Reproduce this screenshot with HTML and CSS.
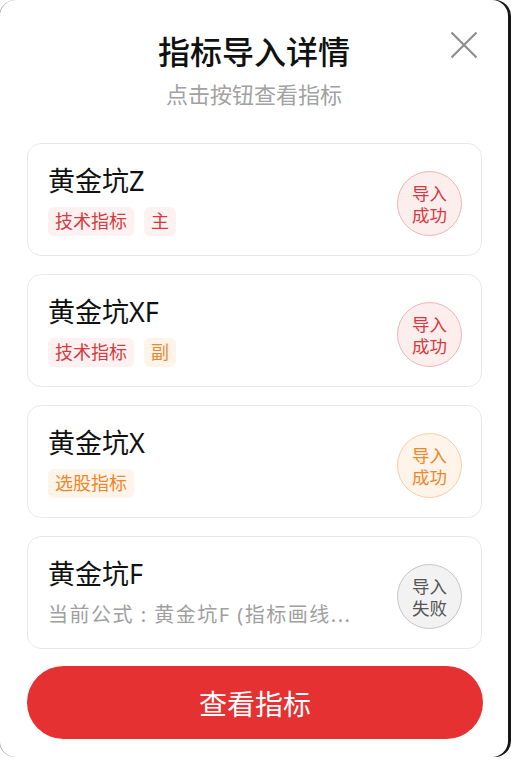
FILE: index.html
```html
<!doctype html>
<html lang="zh-CN">
  <head>
    <meta charset="UTF-8" />
    <meta name="viewport" content="width=device-width, initial-scale=1.0" />
    <title>指标导入详情</title>
    <link rel="stylesheet" href="styles.css">
  </head>
  <body>
    <!-- Import result sheet -->
    <div class="sheet">
      <div class="sheet-header">
        <div class="sheet-title">指标导入详情</div>
        <div class="sheet-subtitle">点击按钮查看指标</div>
        <button class="close-btn" title="关闭">
          <svg width="28" height="28" viewBox="0 0 28 28">
            <path d="M1.5 1.5 L26.5 26.5 M26.5 1.5 L1.5 26.5" stroke="#8e8e8e" stroke-width="2.2" fill="none" />
          </svg>
        </button>
      </div>

      <div class="import-list">
        <div class="import-card">
          <div class="import-info">
            <div class="import-name">黄金坑Z</div>
            <div class="tag-row">
              <span class="tag tag-red">技术指标</span>
              <span class="tag tag-red">主</span>
            </div>
          </div>
          <div class="status status-red">导入<br>成功</div>
        </div>

        <div class="import-card">
          <div class="import-info">
            <div class="import-name">黄金坑XF</div>
            <div class="tag-row">
              <span class="tag tag-red">技术指标</span>
              <span class="tag tag-orange">副</span>
            </div>
          </div>
          <div class="status status-red">导入<br>成功</div>
        </div>

        <div class="import-card">
          <div class="import-info">
            <div class="import-name">黄金坑X</div>
            <div class="tag-row">
              <span class="tag tag-orange">选股指标</span>
            </div>
          </div>
          <div class="status status-orange">导入<br>成功</div>
        </div>

        <div class="import-card">
          <div class="import-info">
            <div class="import-name">黄金坑F</div>
            <div class="import-desc">当前公式 : 黄金坑F (指标画线...</div>
          </div>
          <div class="status status-gray">导入<br>失败</div>
        </div>
      </div>

      <div class="sheet-footer">
        <button class="primary-btn">查看指标</button>
      </div>
    </div>
  </body>
</html>
```

FILE: styles.css
```css
body {
  margin: 0;
  background: #fff;
  font-family: "Noto Sans", "Noto Sans CJK SC", sans-serif;
}

/* Sheet */
.sheet {
  position: relative;
  box-sizing: border-box;
  width: 508px;
  height: 757px;
  background: #fff;
  border-radius: 16px;
  box-shadow: 3px 0 0 #161616, -1px 0 0 #b4b4b4;
}

.sheet-header {
  padding-top: 32px;
  text-align: center;
}

.sheet-title {
  font-size: 32px;
  line-height: 40px;
  font-weight: 500;
  color: #111;
}

.sheet-subtitle {
  margin-top: 7px;
  font-size: 22px;
  line-height: 30px;
  color: #a2a2a2;
}

.close-btn {
  position: absolute;
  top: 31px;
  right: 30px;
  padding: 0;
  border: none;
  background: none;
  line-height: 0;
  cursor: pointer;
}

/* Cards */
.import-list {
  display: flex;
  flex-direction: column;
  gap: 18px;
  margin: 34px 26px 0 27px;
}

.import-card {
  box-sizing: border-box;
  height: 113px;
  display: flex;
  align-items: center;
  padding: 0 19px 0 20px;
  border: 1px solid #e9e9e9;
  border-radius: 14px;
}

.import-info {
  flex: 1;
  min-width: 0;
}

.import-name {
  font-size: 27px;
  line-height: 34px;
  color: #111;
}

.tag-row {
  display: flex;
  gap: 10px;
  margin-top: 9px;
}

.tag {
  padding: 0 7px;
  font-size: 18px;
  line-height: 29px;
  border-radius: 6px;
}

.tag-red {
  color: #d63a40;
  background: #fdf1f1;
}

.tag-orange {
  color: #ee8729;
  background: #fff4ea;
}

.import-desc {
  margin-top: 9px;
  font-size: 20px;
  line-height: 29px;
  letter-spacing: 1.5px;
  color: #a0a0a0;
  white-space: nowrap;
}

.status {
  flex: none;
  box-sizing: border-box;
  width: 65px;
  height: 65px;
  margin-top: 8px;
  display: flex;
  align-items: center;
  justify-content: center;
  text-align: center;
  border-radius: 50%;
  border: 1px solid;
  font-size: 17.5px;
  line-height: 22px;
}

.status-red {
  color: #d63a40;
  background: #fdeeee;
  border-color: #f0b4b7;
}

.status-orange {
  color: #ee8729;
  background: #fff4ea;
  border-color: #f8cea4;
}

.status-gray {
  color: #555;
  background: #f2f2f2;
  border-color: #c6c6c6;
}

/* Footer */
.sheet-footer {
  margin: 17px 25px 0 27px;
}

.primary-btn {
  width: 100%;
  height: 73px;
  border: none;
  border-radius: 37px;
  background: #e63133;
  color: #fff;
  font-family: inherit;
  font-size: 28px;
  cursor: pointer;
}
```
